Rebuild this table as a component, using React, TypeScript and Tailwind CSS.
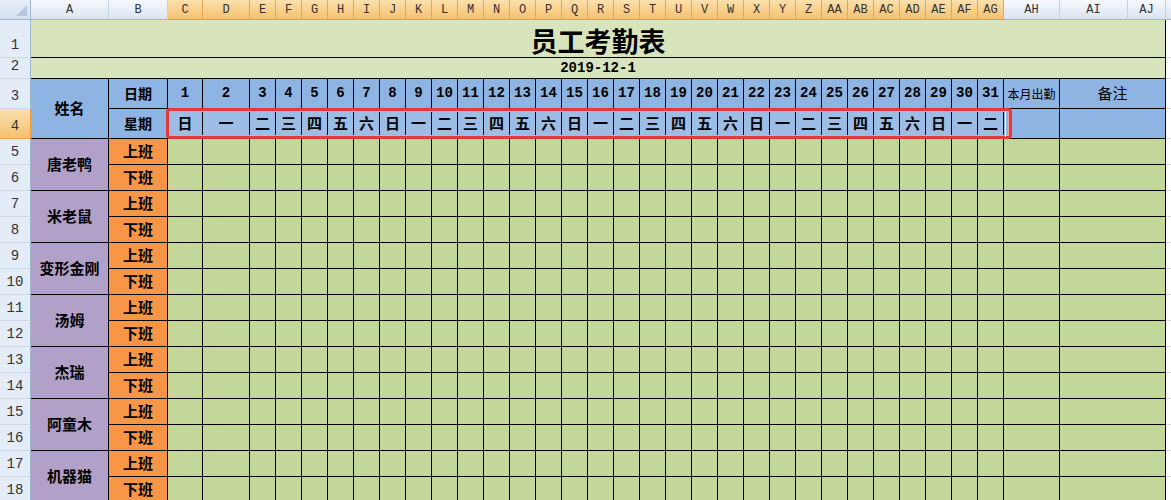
import React from "react";

const DAYS = ["日", "一", "二", "三", "四", "五", "六"];
const NAMES = ["唐老鸭", "米老鼠", "变形金刚", "汤姆", "杰瑞", "阿童木", "机器猫"];

// Excel style column letters
const colName = (i: number) => {
  let s = "";
  let n = i + 1;
  while (n > 0) {
    const r = (n - 1) % 26;
    s = String.fromCharCode(65 + r) + s;
    n = Math.floor((n - 1) / 26);
  }
  return s;
};

const DAY_COLS = Array.from({ length: 31 }, (_, i) => i + 1);

const mono = "font-['Liberation_Mono','Noto_Sans_CJK_SC',monospace]";
const cell = "border-r border-b border-black flex items-center justify-center";

const ColHeader = ({ label, selected }: { label: string; selected?: boolean }) => (
  <div
    className={
      selected
        ? `flex items-center justify-center text-[12px] text-[#333] border-r border-b border-r-[#e9a552] border-b-[#f29a38] bg-gradient-to-b from-[#fbe0ad] to-[#f5c16e] ${mono}`
        : `flex items-center justify-center text-[12px] text-[#333] border-r border-b border-r-[#c5d2e3] border-b-[#9eb6ce] bg-gradient-to-b from-[#f6f8fc] to-[#dbe4f1] ${mono}`
    }
  >
    {label}
  </div>
);

const RowHeader = ({ n, selected }: { n: number; selected?: boolean }) => (
  <div
    className={
      selected
        ? `flex items-end justify-center pb-[1px] text-[14px] text-[#333] border-r border-b border-r-[#f29a38] border-b-[#e9a552] bg-gradient-to-b from-[#fbe0ad] to-[#f5c16e] ${mono}`
        : `flex items-end justify-center pb-[1px] text-[14px] text-[#333] border-r border-b border-r-[#9eb6ce] border-b-[#cdd8e8] bg-[#e4ecf7] ${mono}`
    }
  >
    {n}
  </div>
);

const Filler = () => <div className="bg-white border-b border-[#dadcdd]" />;

export default function App() {
  const rows: React.ReactNode[] = [];

  for (let r = 5; r <= 18; r++) {
    const first = r % 2 === 1;
    rows.push(<RowHeader key={`rh${r}`} n={r} />);
    if (first) {
      rows.push(
        <div key={`n${r}`} className={`row-span-2 bg-[#b1a0c7] text-[15px] font-bold ${cell}`}>
          {NAMES[(r - 5) / 2]}
        </div>
      );
    }
    rows.push(
      <div key={`s${r}`} className={`bg-[#f79646] text-[15px] font-bold ${cell}`}>
        {first ? "上班" : "下班"}
      </div>
    );
    DAY_COLS.forEach((d) => rows.push(<div key={`c${r}-${d}`} className={`bg-[#c4d79b] ${cell}`} />));
    rows.push(<div key={`ah${r}`} className={`bg-[#c4d79b] ${cell}`} />);
    rows.push(<div key={`ai${r}`} className={`col-span-2 bg-[#c4d79b] ${cell}`} />);
    rows.push(<Filler key={`f${r}`} />);
  }

  return (
    <div className="w-[1171px] h-[500px] overflow-hidden bg-white font-['Noto_Sans_CJK_SC',sans-serif] text-black">
      <div className="relative">
        <div className="grid grid-cols-[31px_78px_59px_35px_47px_repeat(29,26px)_56px_68px_38px_1fr] grid-rows-[20px_38px_21px_30px_30px_repeat(14,26px)]">
          {/* column headers */}
          <div className="relative border-r border-b border-r-[#9eb6ce] border-b-[#9eb6ce] bg-gradient-to-b from-[#e8eef7] to-[#d3dff0]">
            <div className="absolute right-[3px] bottom-[3px] w-0 h-0 border-l-[10px] border-t-[10px] border-l-transparent border-t-transparent border-b-[0px] border-r-[0px]" />
            <div className="absolute right-[3px] bottom-[3px] w-0 h-0 border-b-[11px] border-l-[11px] border-b-[#b5c6dd] border-l-transparent" />
          </div>
          <ColHeader label="A" />
          <ColHeader label="B" />
          {DAY_COLS.map((d) => (
            <ColHeader key={`h${d}`} label={colName(d + 1)} selected />
          ))}
          <ColHeader label="AH" />
          <ColHeader label="AI" />
          <ColHeader label="AJ" />
          <div className="border-b border-b-[#9eb6ce] bg-gradient-to-b from-[#f6f8fc] to-[#dbe4f1]" />

          {/* row 1: title */}
          <RowHeader n={1} />
          <div className="col-span-36 bg-[#d8e4bc] border-r border-b border-black flex items-center justify-center pt-[4px] text-[27px] font-bold leading-none">
            员工考勤表
          </div>
          <Filler />

          {/* row 2: date */}
          <RowHeader n={2} />
          <div className={`col-span-36 bg-[#d8e4bc] border-r border-b border-black flex items-center justify-center text-[14px] font-bold ${mono}`}>
            2019-12-1
          </div>
          <Filler />

          {/* row 3 */}
          <RowHeader n={3} />
          <div className={`row-span-2 bg-[#8db4e2] text-[15px] font-bold ${cell}`}>姓名</div>
          <div className={`bg-[#8db4e2] text-[14px] font-bold ${cell}`}>日期</div>
          {DAY_COLS.map((d) => (
            <div key={`d${d}`} className={`bg-[#8db4e2] text-[14px] font-bold ${mono} ${cell}`}>
              {d}
            </div>
          ))}
          <div className={`bg-[#8db4e2] text-[12px] ${cell}`}>本月出勤</div>
          <div className={`col-span-2 bg-[#8db4e2] text-[15px] ${cell}`}>备注</div>
          <Filler />

          {/* row 4 */}
          <RowHeader n={4} selected />
          <div className={`bg-[#8db4e2] text-[14px] font-bold ${cell}`}>星期</div>
          {DAY_COLS.map((d) => (
            <div key={`w${d}`} className={`bg-[#9bbde6] text-[15px] font-bold ${cell}`}>
              {DAYS[(d - 1) % 7]}
            </div>
          ))}
          <div className={`bg-[#8db4e2] ${cell}`} />
          <div className={`col-span-2 bg-[#8db4e2] ${cell}`} />
          <Filler />

          {rows}
        </div>

        {/* selection highlight around the weekday row */}
        <div className="absolute left-[166px] top-[108px] w-[846px] h-[31px] border-[3px] border-[#e3393d] rounded-[4px] shadow-[inset_0_0_0_1px_#f3a0a2]" />
        <div className="absolute left-[1005px] top-[111px] w-px h-[26px] bg-white" />
      </div>
    </div>
  );
}
